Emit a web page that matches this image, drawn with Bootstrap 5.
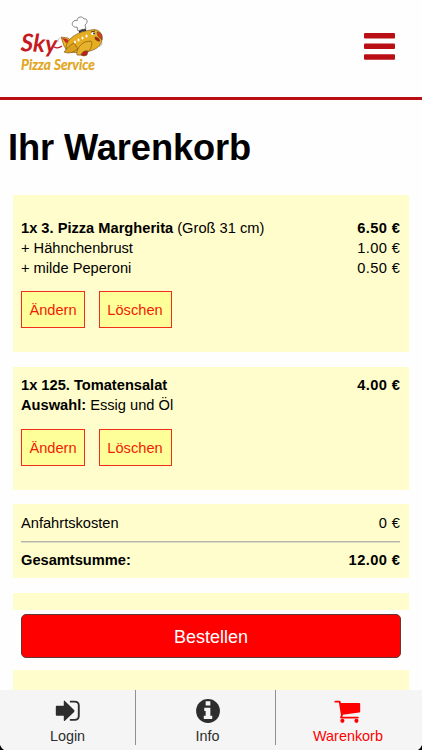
<!DOCTYPE html>
<html lang="de">
<head>
<meta charset="utf-8">
<meta name="viewport" content="width=device-width, initial-scale=1">
<title>Ihr Warenkorb</title>
<link href="https://cdn.jsdelivr.net/npm/bootstrap@5.3.0/dist/css/bootstrap.min.css" rel="stylesheet">
<style>
body{font-family:"Liberation Sans",Arial,sans-serif;font-size:14.65px;line-height:20px;color:#000;background:#fefefe;height:750px;overflow:hidden}
.site-head{height:100px;border-bottom:3px solid #b90f14;padding:0 27px 5px 18px}
.site-logo{width:90px;height:64px}
.page-title{font-size:36.3px;font-weight:700;line-height:44px;letter-spacing:-.12px;margin:26px 0 0 8px}
.cart-box{background:#fffdcb;margin:0 13px;padding:8px 9px 0 8px}
.box-a{height:157px;margin-top:25px;padding-top:23px}
.box-b{height:123px;margin-top:15px}
.box-c{height:74px;margin-top:14px;padding-top:9px}
.box-d{height:17px;margin-top:15px;padding:0}
.box-e{height:80px;margin-top:12px}
.price{letter-spacing:.42px;margin-right:-.42px}
.btn-row{gap:14px;margin-top:13px}
.box-b .btn-row{margin-top:14px}
.btn-cart{height:37px;width:64px;border:1px solid #f02c1c;border-radius:0;background:#ffff99;color:#f01c05;font-size:14.65px;line-height:20px;padding:1px 0 0}
.btn-wide{width:73px;padding-right:1px}
.sum-line{height:2px;background:#b5b5aa;border-bottom:1px solid #dcdcc0;margin:8px 0 7px}
.btn-order{display:block;height:44px;margin:4px 21px 0;width:380px;background:#f00;border:1px solid #643636;border-radius:5px;color:#fff;font-size:18px;line-height:22px;padding-top:8px}
.tab-nav{height:60px;background:#f5f5f5;font-size:14.4px;line-height:17px}
.tab-link{color:#2d2d2d;height:55px;padding-top:6px;width:140px}
.tab-first{width:136px}
.tab-mid{padding-left:4px}
.tab-link svg{width:32px;height:32px}
.tab-link span{margin-top:2px}
.tab-line{border-right:1px solid #919191}
.tab-on{color:#f00;width:144px}
.corner{position:absolute;bottom:0;width:4px;height:5px}
</style>
</head>
<body>
<header class="site-head d-flex justify-content-between align-items-center">
<svg class="site-logo" viewBox="18 14 90 64" role="img" aria-label="Sky Pizza Service">
<g font-family="Lato,sans-serif" font-style="italic" font-weight="700">
<text x="20.500" y="51" font-size="24.5" fill="#c51a21" textLength="36" lengthAdjust="spacingAndGlyphs" transform="rotate(3 21 51)">Sky</text>
<text x="21" y="69.500" font-size="14.5" fill="#e2a51b" stroke="#e2a51b" stroke-width=".2" textLength="74" lengthAdjust="spacingAndGlyphs">Pizza Service</text>
</g>
<path d="M54 47Q58 49 62 46" fill="none" stroke="#c51a21" stroke-width="1.3"/>
<g stroke="#6f4b19" stroke-width=".6" stroke-linejoin="round">
<path d="M61 37L68 38 73 42 66 49 64 46Z" fill="#edb426"/>
<path d="M62 38L67 39 70 42 66 43Z" fill="#c82a20" stroke="none"/>
<path d="M66 47C67 38 79 31 91 30C98 28 103 33 102 40C101 47 94 51 85 52C77 53 69 53 66 50Z" fill="#e6ad20"/>
<path d="M74 43C68 46 66 50 64 52Q70 55 78 49Z" fill="#dca11c"/>
<path d="M85 42C79 45 76 51 77 55Q84 56 87 53C91 49 93 44 91 41Z" fill="#e8b32b"/>
<path d="M81 55Q83 50 88 51L87 55Q84 57 81 55Z" fill="#b92220"/>
<path d="M97 32Q103 32 102 40L98 36Z" fill="#d63b28"/>
<path d="M95 37Q99 37 100 41Q98 42 95 39Z" fill="#a91c1b"/>
</g>
<g fill="#fff"><ellipse cx="75" cy="42" rx="1" ry="1.5"/><ellipse cx="78.500" cy="40" rx="1" ry="1.5"/><ellipse cx="82.500" cy="38" rx="1" ry="1.5"/><ellipse cx="86.500" cy="36" rx="1" ry="1.5"/><ellipse cx="93" cy="33.500" rx="2" ry="1.500"/></g>
<circle cx="94" cy="33.500" r=".9" fill="#222"/><path d="M91 32L95 31" stroke="#3b2918" stroke-width=".9"/>
<path d="M78 31L77 27C73 28 71 24 73 22C74 20 76 20 77 21C77 16 83 16 84 19C88 18 88 23 85 25L86 29Q82 29 78 31Z" fill="#fff" stroke="#777" stroke-width=".9"/>
<path d="M79 31Q82 29 86 29L86 31Q82 31 79 33Z" fill="#333"/>
<path d="M58 42Q57 39 60 38M99 47Q103 45 102 42" fill="none" stroke="#999" stroke-width=".6"/>
</svg>
<svg width="31" height="27" viewBox="0 0 31 27" fill="#b90f14" aria-label="Menü"><rect width="31" height="5.500" rx="1"/><rect y="10.500" width="31" height="5.500" rx="1"/><rect y="21.300" width="31" height="5.500" rx="1"/></svg>
</header>
<main>
<h1 class="page-title">Ihr Warenkorb</h1>
<section class="cart-box box-a">
<div class="d-flex justify-content-between"><span><b>1x 3. Pizza Margherita</b> (Groß 31 cm)</span><b class="price">6.50 €</b></div>
<div class="d-flex justify-content-between"><span>+ Hähnchenbrust</span><span class="price">1.00 €</span></div>
<div class="d-flex justify-content-between"><span>+ milde Peperoni</span><span class="price">0.50 €</span></div>
<div class="d-flex btn-row"><button class="btn btn-cart">Ändern</button><button class="btn btn-cart btn-wide">Löschen</button></div>
</section>
<section class="cart-box box-b">
<div class="d-flex justify-content-between"><b>1x 125. Tomatensalat</b><b class="price">4.00 €</b></div>
<div><b>Auswahl:</b> Essig und Öl</div>
<div class="d-flex btn-row"><button class="btn btn-cart">Ändern</button><button class="btn btn-cart btn-wide">Löschen</button></div>
</section>
<section class="cart-box box-c">
<div class="d-flex justify-content-between"><span>Anfahrtskosten</span><span class="price">0 €</span></div>
<div class="sum-line"></div>
<div class="d-flex justify-content-between"><b>Gesamtsumme:</b><b class="price">12.00 €</b></div>
</section>
<div class="cart-box box-d"></div>
<button class="btn btn-order">Bestellen</button>
<div class="cart-box box-e"></div>
</main>
<nav class="tab-nav fixed-bottom d-flex text-center">
<a class="tab-link tab-first tab-line d-flex flex-column align-items-center text-decoration-none" href="#"><svg viewBox="0 0 32 32"><path d="M3 11.500Q3 10.500 4 10.500H11.500V6Q11.500 4 13 5.500L22.500 15Q23.300 16 22.500 17L13 26Q11.500 27.500 11.500 25.500V21H4Q3 21 3 20Z" fill="currentColor"/><path d="M18 6H23Q27.500 6 27.500 10V21Q27.500 25.500 23 25.500H18" fill="none" stroke="currentColor" stroke-width="2"/></svg><span>Login</span></a>
<a class="tab-link tab-mid tab-line d-flex flex-column align-items-center text-decoration-none" href="#"><svg viewBox="0 0 32 32"><circle cx="16" cy="16" r="12.700" fill="currentColor"/><path d="M13.500 5.500H18.500V10H13.500ZM12 12.500H18.500V21H20.500V24.500H11.500V21H13.500V16H12Z" fill="#f5f5f5"/></svg><span>Info</span></a>
<a class="tab-link tab-on d-flex flex-column align-items-center text-decoration-none" href="#"><svg viewBox="0 0 32 32"><path d="M2.500 5H7Q8 5 8.500 7.500H28Q29 7.500 29 8.500V16.500Q29 17.500 28 17.700L10.500 20L10 22H26.500Q27.500 22 27.500 23T26.500 24H9Q7.500 24 7.500 23L8.500 20.500L6.300 7H2.500Q1.500 7 1.500 6T2.500 5Z" fill="currentColor"/><circle cx="10" cy="26.500" r="2.200" fill="currentColor"/><circle cx="25" cy="26.500" r="2.200" fill="currentColor"/></svg><span>Warenkorb</span></a>
<svg class="corner start-0" viewBox="0 0 4 5"><path d="M0 0Q1 3 4 5H0Z"/></svg>
<svg class="corner end-0" viewBox="0 0 4 5"><path d="M4 0Q3 3 0 5H4Z"/></svg>
</nav>
<script src="https://cdn.jsdelivr.net/npm/bootstrap@5.3.0/dist/js/bootstrap.bundle.min.js"></script>
</body>
</html>
